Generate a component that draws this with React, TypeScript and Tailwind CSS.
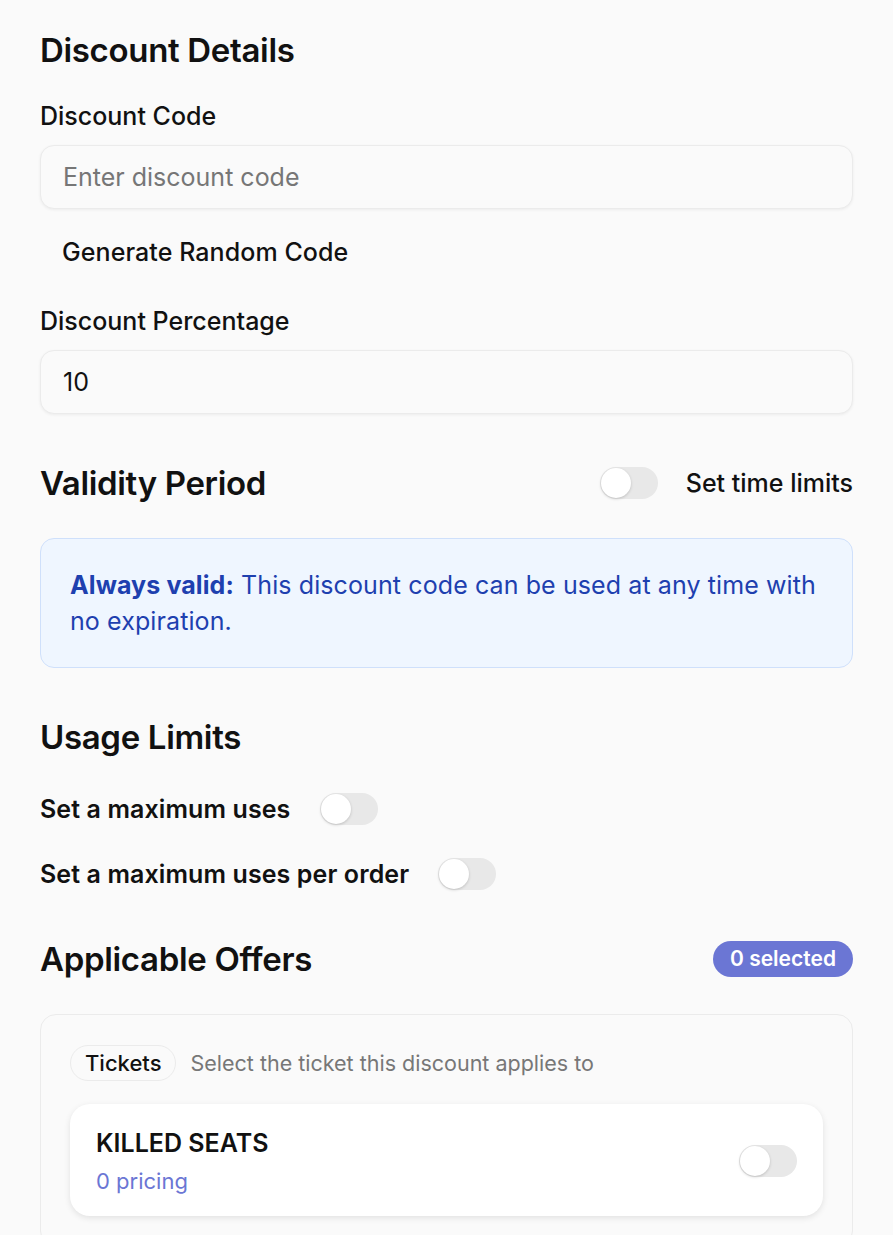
import { useState } from 'react';

function Toggle({ checked, onChange }: { checked: boolean; onChange: (v: boolean) => void }) {
  return (
    <button
      type="button"
      onClick={() => onChange(!checked)}
      className={`relative flex h-[32px] w-[58px] shrink-0 items-center rounded-full p-[1px] transition ${
        checked ? 'bg-[#6b76d4]' : 'bg-[#e8e8e8]'
      }`}
    >
      <span
        className={`block h-[30px] w-[30px] rounded-full bg-white shadow-[0_1px_3px_rgba(0,0,0,0.18)] transition ${
          checked ? 'translate-x-[26px]' : 'translate-x-0'
        }`}
      />
    </button>
  );
}

export default function App() {
  const [code, setCode] = useState('');
  const [percent, setPercent] = useState('10');
  const [timeLimits, setTimeLimits] = useState(false);
  const [maxUses, setMaxUses] = useState(false);
  const [maxPerOrder, setMaxPerOrder] = useState(false);
  const [killedSeats, setKilledSeats] = useState(false);

  function generateCode() {
    setCode(Math.random().toString(36).slice(2, 10).toUpperCase());
  }

  return (
    <div className="min-h-screen bg-[#fafafa] px-10 pt-[30px] text-[#111] font-['Inter',sans-serif]">
      <h2 className="text-[33px] font-semibold leading-[40px] tracking-[-0.01em]">Discount Details</h2>

      <label htmlFor="code" className="mt-[31px] block text-[25px] font-medium leading-[30px]">
        Discount Code
      </label>
      <input
        id="code"
        value={code}
        onChange={(e) => setCode(e.target.value)}
        placeholder="Enter discount code"
        className="mt-[14px] block h-[64px] w-full rounded-[14px] border border-[#ebebeb] bg-[#fafafa] px-[22px] text-[25px] text-[#111] shadow-[0_1px_3px_rgba(0,0,0,0.06)] outline-none placeholder:text-[#767676]"
      />
      <button
        type="button"
        onClick={generateCode}
        className="mt-[13px] block px-[22px] py-[15px] text-[25px] font-medium leading-[30px] tracking-[0.003em]"
      >
        Generate Random Code
      </button>

      <label htmlFor="percent" className="mt-[24px] block text-[25px] font-medium leading-[30px]">
        Discount Percentage
      </label>
      <input
        id="percent"
        value={percent}
        onChange={(e) => setPercent(e.target.value)}
        className="mt-[14px] block h-[64px] w-full rounded-[14px] border border-[#ebebeb] bg-[#fafafa] px-[22px] text-[25px] text-[#111] shadow-[0_1px_3px_rgba(0,0,0,0.06)] outline-none"
      />

      <div className="mt-[49px] flex items-center justify-between">
        <h2 className="text-[33px] font-semibold leading-[40px] tracking-[-0.01em]">Validity Period</h2>
        <div className="flex items-center gap-[28px]">
          <Toggle checked={timeLimits} onChange={setTimeLimits} />
          <span className="text-[25px] font-medium leading-[30px]">Set time limits</span>
        </div>
      </div>

      <div className="mt-[35px] rounded-[14px] border border-[#cfe0fb] bg-[#eff6ff] px-[29px] py-[28px] text-[25px] leading-[36px] text-[#1e40af] tracking-[0.004em]">
        <span className="font-bold">Always valid:</span> This discount code can be used at any time with no
        expiration.
      </div>

      <h2 className="mt-[49px] text-[33px] font-semibold leading-[40px] tracking-[-0.01em]">Usage Limits</h2>

      <div className="mt-[36px] flex items-center gap-[30px]">
        <span className="text-[25px] font-semibold leading-[30px] tracking-[0.004em]">Set a maximum uses</span>
        <Toggle checked={maxUses} onChange={setMaxUses} />
      </div>
      <div className="mt-[33px] flex items-center gap-[29px]">
        <span className="text-[25px] font-semibold leading-[30px] tracking-[0.004em]">
          Set a maximum uses per order
        </span>
        <Toggle checked={maxPerOrder} onChange={setMaxPerOrder} />
      </div>

      <div className="mt-[49px] flex items-center justify-between">
        <h2 className="text-[33px] font-semibold leading-[40px] tracking-[-0.01em]">Applicable Offers</h2>
        <span className="rounded-full bg-[#6b76d4] px-[17px] py-[3px] text-[21px] font-semibold leading-[30px] text-white">
          {killedSeats ? 1 : 0} selected
        </span>
      </div>

      <div className="mt-[35px] rounded-[16px] border border-[#ebebeb] bg-[#fafafa] px-[29px] pt-[30px] pb-[30px]">
        <div className="flex items-center gap-[14px]">
          <span className="rounded-full border border-[#ebebeb] px-[14px] py-[2px] text-[22px] font-medium leading-[30px]">
            Tickets
          </span>
          <span className="text-[21.5px] leading-[30px] text-[#777]">
            Select the ticket this discount applies to
          </span>
        </div>

        <div className="mt-[23px] flex items-center justify-between rounded-[20px] bg-white px-[26px] pt-[22px] pb-[20px] shadow-[0_2px_6px_rgba(0,0,0,0.1)]">
          <div>
            <div className="text-[25px] font-semibold leading-[34px]">KILLED SEATS</div>
            <div className="mt-[6px] text-[22px] leading-[30px] text-[#6b76d4]">0 pricing</div>
          </div>
          <Toggle checked={killedSeats} onChange={setKilledSeats} />
        </div>
      </div>
    </div>
  );
}
